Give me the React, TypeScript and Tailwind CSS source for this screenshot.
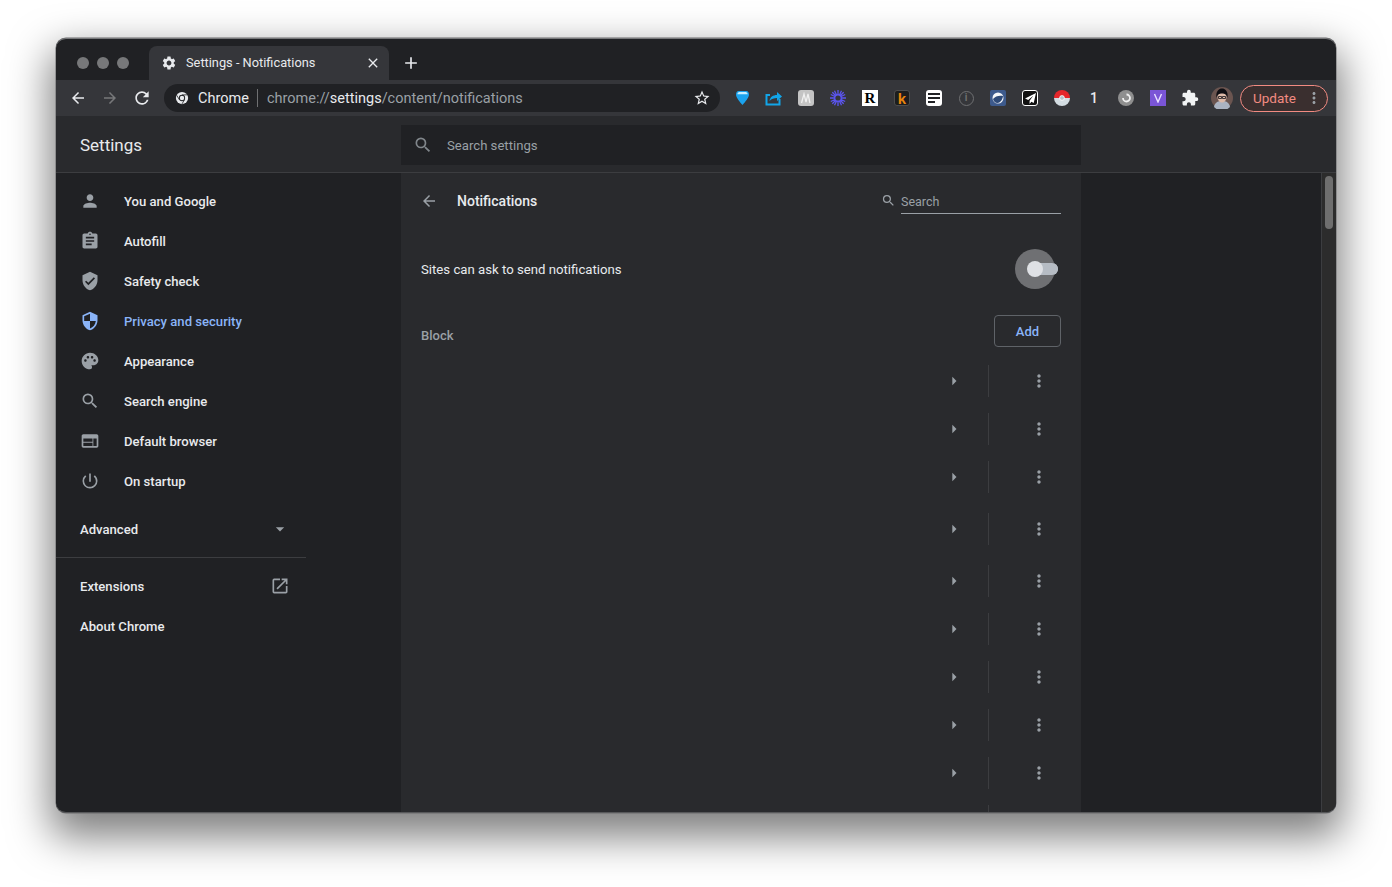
import {
  MdAdd,
  MdArrowBack,
  MdArrowDropDown,
  MdArrowForward,
  MdArrowRight,
  MdAssignment,
  MdClose,
  MdExtension,
  MdMoreVert,
  MdOpenInNew,
  MdPalette,
  MdPerson,
  MdPowerSettingsNew,
  MdRefresh,
  MdSearch,
  MdSecurity,
  MdSettings,
  MdStarBorder,
  MdVerifiedUser,
  MdWeb,
} from "react-icons/md";

const NAV_ITEMS = [
  { label: "You and Google", icon: MdPerson },
  { label: "Autofill", icon: MdAssignment },
  { label: "Safety check", icon: MdVerifiedUser },
  { label: "Privacy and security", icon: MdSecurity, active: true },
  { label: "Appearance", icon: MdPalette },
  { label: "Search engine", icon: MdSearch },
  { label: "Default browser", icon: MdWeb },
  { label: "On startup", icon: MdPowerSettingsNew },
];

// row heights of the blocked sites list, the 4th one is taller
const ROW_HEIGHTS = [
  "h-12", "h-12", "h-12", "h-14", "h-12", "h-12", "h-12", "h-12", "h-12", "h-12",
];

function ChromeLogo() {
  return (
    <svg width="14" height="14" viewBox="0 0 16 16" className="shrink-0">
      <circle cx="8" cy="8" r="7" fill="#e8eaed" />
      <circle cx="8" cy="8" r="3.6" fill="#202124" />
      <circle cx="8" cy="8" r="2.5" fill="#e8eaed" />
      <path d="M8 4.4h6.2M5 10 1.9 4.8M10.9 10 7.8 15" stroke="#202124" strokeWidth="0.9" />
    </svg>
  );
}

function ExtensionIcons() {
  return (
    <>
      <Slot>
        <svg width="13" height="16" viewBox="0 0 14 16">
          <path d="M3 .5h8C13 .5 14 2 14 4.500 14 7.500 10 12 7 15.500 4 12 0 7.500 0 4.500 0 2 1 .5 3 .5z" fill="#1ba3ee" />
          <path d="M3.500 1.500h7c1 0 2 1 2 2.500h-11c0-1.500 1-2.500 2-2.500z" fill="#c9eeff" />
        </svg>
      </Slot>
      <Slot>
        <svg width="18" height="16" viewBox="0 0 18 16" fill="none">
          <path d="M5 5H1.500v9.500h13V9" stroke="#12a5e8" strokeWidth="2" />
          <path d="M4.500 11c.5-4 3.500-6 7.500-6V2l5 4.500-5 4.500V8c-3 0-5.500.8-7.500 3z" fill="#12a5e8" />
        </svg>
      </Slot>
      <Slot>
        <div className="flex h-4 w-4 items-center justify-center rounded-[3px] bg-[#c4c4c4]">
          <svg width="12" height="12" viewBox="0 0 12 12" fill="none">
            <path d="M1.500 11 4 2l2 8 2-8 2 9" stroke="#f0f0f0" strokeWidth="1.300" />
          </svg>
        </div>
      </Slot>
      <Slot>
        <svg width="16" height="16" viewBox="0 0 16 16" stroke="#5b55f0" strokeWidth="1.300">
          <path d="M8 0v16M0 8h16M2.300 2.300l11.400 11.400M13.700 2.300 2.300 13.700M4.500 .8l7 14.400M11.500 .8l-7 14.400M.8 4.500l14.400 7M15.200 4.500l-14.400 7" />
          <circle cx="8" cy="8" r="3.300" fill="#35363a" stroke="#5b55f0" strokeWidth="1.400" />
        </svg>
      </Slot>
      <Slot>
        <div className="flex h-4 w-4 items-center justify-center bg-white font-['Liberation_Serif',serif] text-[15px] leading-none font-bold text-black">
          R
        </div>
      </Slot>
      <Slot>
        <div className="flex h-4 w-4 items-center justify-center rounded-[3px] border border-[#4d4d4d] bg-[#1d1d1d] font-['Liberation_Sans',sans-serif] text-[15px] leading-none font-bold text-[#e8850c]">
          k
        </div>
      </Slot>
      <Slot>
        <div className="flex h-4 w-4 flex-col justify-center gap-[2px] rounded-[3px] bg-white px-[2px]">
          <div className="h-[2px] w-full bg-[#202124]" />
          <div className="h-[2px] w-full bg-[#202124]" />
          <div className="h-[2px] w-[7px] bg-[#202124]" />
        </div>
      </Slot>
      <Slot>
        <div className="flex h-[15px] w-[15px] items-center justify-center rounded-full border-[1.5px] border-[#6f7072] text-[10px] leading-none font-bold text-[#6f7072]">
          i
        </div>
      </Slot>
      <Slot>
        <svg width="16" height="16" viewBox="0 0 16 16">
          <rect width="16" height="16" rx="2" fill="#3d5a8c" />
          <circle cx="8" cy="8" r="5.500" fill="#f4f6f9" />
          <path d="M3 9c2-3 7-4 10-3-.5 4-3 7-5.500 7C5 13 3.500 11 3 9z" fill="#2e4a78" />
        </svg>
      </Slot>
      <Slot>
        <div className="flex h-4 w-4 items-center justify-center rounded-[3px] border border-white bg-[#111]">
          <svg width="11" height="11" viewBox="0 0 12 12">
            <path d="M12 0 0 6l3.500 1.500L9 3 5 8.500V12l2-2.500L9.500 11z" fill="#fff" />
          </svg>
        </div>
      </Slot>
      <Slot>
        <svg width="16" height="16" viewBox="0 0 16 16">
          <path d="M0 8a8 8 0 0 1 16 0z" fill="#e5262a" />
          <path d="M0 8h16a8 8 0 0 1-16 0z" fill="#d4dde2" />
          <circle cx="8" cy="8" r="2.400" fill="#b7c3ca" stroke="#fff" strokeWidth="0.800" />
        </svg>
      </Slot>
      <Slot>
        <span className="font-['Roboto',sans-serif] text-[14px] font-medium text-[#e8eaed]">1</span>
      </Slot>
      <Slot>
        <div className="flex h-4 w-4 items-center justify-center rounded-full bg-[#8f8f8f]">
          <svg width="10" height="10" viewBox="0 0 10 10" fill="none">
            <path d="M5.500 1.500A3.500 3.500 0 1 1 2 5" stroke="#f1f1f1" strokeWidth="1.800" />
          </svg>
        </div>
      </Slot>
      <Slot>
        <div className="flex h-4 w-4 items-center justify-center bg-[#7a55d6]">
          <svg width="10" height="10" viewBox="0 0 10 10" fill="none">
            <path d="M1.500 1 5 9l3.500-8" stroke="#e8e0ff" strokeWidth="1.400" />
          </svg>
        </div>
      </Slot>
      <Slot>
        <MdExtension size={18} color="#f1f3f4" />
      </Slot>
      <Slot>
        <svg width="22" height="22" viewBox="0 0 22 22">
          <circle cx="11" cy="11" r="11" fill="#6b5550" />
          <path d="M3 20c1-5 4-6 8-6s7 1 8 6a11 11 0 0 1-16 0z" fill="#aab3c2" />
          <ellipse cx="11" cy="10" rx="4.500" ry="5.500" fill="#dcb9a8" />
          <path d="M5.500 11C4.500 4 8 1.500 11 1.500s6.500 2.500 5.500 9.500C15.500 7.500 14 6.500 11 6.500S6.500 7.500 5.500 11z" fill="#0f0e13" />
          <path d="M7.500 9.500h3v2h-3zM11.500 9.500h3v2h-3z" fill="none" stroke="#15141a" strokeWidth="0.800" />
        </svg>
      </Slot>
    </>
  );
}

function Slot({ children }: { children: React.ReactNode }) {
  return <div className="flex h-8 w-8 shrink-0 items-center justify-center">{children}</div>;
}

function NavRow({ label, icon: Icon, active }: (typeof NAV_ITEMS)[number]) {
  return (
    <div className="flex h-10 items-center pl-6">
      <Icon size={20} color={active ? "#8ab4f8" : "#9aa0a6"} />
      <span className={`mt-[2px] ml-6 text-[13.100px] font-medium ${active ? "text-[#8ab4f8]" : "text-[#e8eaed]"}`}>
        {label}
      </span>
    </div>
  );
}

export default function App() {
  return (
    <div className="h-[887px] overflow-hidden bg-white pt-[38px] pl-[56px] font-['Roboto',sans-serif]">
      <div className="flex h-[775px] w-[1280px] flex-col overflow-hidden rounded-[10px] border-t border-b border-t-[#77787a] border-b-[#57585a] bg-[#202124] shadow-[0_0_0_0.5px_#6a6b6d,0_18px_40px_6px_rgba(0,0,0,0.5)]">
        {/* Tab strip */}
        <div className="flex h-[41px] shrink-0 items-end">
          <div className="mb-[11px] ml-[21px] flex gap-2">
            <div className="h-3 w-3 rounded-full bg-[#77787a]" />
            <div className="h-3 w-3 rounded-full bg-[#77787a]" />
            <div className="h-3 w-3 rounded-full bg-[#77787a]" />
          </div>
          <div className="ml-[20px] flex h-[34px] w-[240px] items-center rounded-t-lg bg-[#35363a] pr-[8px] pl-[12px]">
            <MdSettings size={16} color="#e8eaed" />
            <span className="ml-[8px] flex-1 pl-px text-[12.800px] text-[#e8eaed]">Settings - Notifications</span>
            <MdClose size={16} color="#e8eaed" />
          </div>
          <div className="mb-[7px] ml-[12px]">
            <MdAdd size={20} color="#e8eaed" />
          </div>
        </div>

        {/* Toolbar */}
        <div className="flex h-9 shrink-0 items-center bg-[#35363a] pl-[6px]">
          <Slot>
            <MdArrowBack size={18} color="#e8eaed" />
          </Slot>
          <Slot>
            <MdArrowForward size={18} color="#77787a" />
          </Slot>
          <Slot>
            <MdRefresh size={20} color="#e8eaed" />
          </Slot>
          <div className="ml-[6px] flex h-7 w-[556px] items-center rounded-full bg-[#202124] pl-[11px]">
            <ChromeLogo />
            <span className="mt-[2px] ml-[9px] text-[14.500px] text-[#e8eaed]">Chrome</span>
            <div className="mx-[8px] h-[18px] w-px bg-[#6f7072]" />
            <span className="mt-[2px] flex-1 pl-px text-[14.500px] text-[#9aa0a6]">
              chrome://<span className="text-[#e8eaed]">settings</span>/content/notifications
            </span>
            <div className="mr-[9px]">
              <MdStarBorder size={18} color="#e8eaed" />
            </div>
          </div>
          <div className="ml-[6px] flex items-center">
            <ExtensionIcons />
          </div>
          <div className="ml-[2px] flex h-[27px] w-[88px] items-center rounded-full border border-[#f28b82] bg-[#3a2f2f] pl-3">
            <span className="flex-1 text-[13.500px] text-[#f28b82]">Update</span>
            <MdMoreVert size={18} color="#9aa0a6" className="mr-[4px]" />
          </div>
        </div>

        {/* Settings header */}
        <div className="flex h-[57px] shrink-0 items-center border-b border-[#3c3d40] bg-[#292a2d]">
          <div className="mt-[4px] w-[345px] pl-6 text-[17px] text-[#e8eaed]">Settings</div>
          <div className="mt-[2px] flex h-10 w-[680px] items-center bg-[#202124] pl-3">
            <MdSearch size={20} color="#80868b" />
            <span className="mt-[2px] ml-[14px] text-[13.150px] text-[#9aa0a6]">Search settings</span>
          </div>
        </div>

        {/* Body */}
        <div className="flex min-h-0 flex-1">
          <div className="w-[345px] shrink-0 pt-2">
            {NAV_ITEMS.map((item) => (
              <NavRow key={item.label} {...item} />
            ))}
            <div className="mt-2 flex h-10 w-[250px] items-center justify-between pr-[16px] pl-6">
              <span className="mt-[2px] text-[13.100px] font-medium text-[#e8eaed]">Advanced</span>
              <MdArrowDropDown size={20} color="#9aa0a6" />
            </div>
            <div className="mt-2 mb-2 h-px w-[250px] bg-[#3c3d40]" />
            <div className="flex h-10 w-[250px] items-center justify-between pr-[16px] pl-6">
              <span className="mt-[2px] text-[13.100px] font-medium text-[#e8eaed]">Extensions</span>
              <MdOpenInNew size={20} color="#9aa0a6" />
            </div>
            <div className="flex h-10 w-[250px] items-center pl-6">
              <span className="mt-[2px] text-[13.100px] font-medium text-[#e8eaed]">About Chrome</span>
            </div>
          </div>

          <div className="w-[680px] shrink-0 overflow-hidden bg-[#292a2d] px-5">
            <div className="flex h-14 items-center">
              <MdArrowBack size={18} color="#9aa0a6" className="ml-[-1px]" />
              <span className="ml-[19px] flex-1 text-[14px] font-medium text-[#e8eaed]">Notifications</span>
              <MdSearch size={15} color="#9aa0a6" className="mr-[5px] mb-[2px]" />
              <div className="mt-px h-[25px] w-[160px] border-b border-[#9aa0a6] text-[12.500px] leading-[26px] text-[#9aa0a6]">
                Search
              </div>
            </div>
            <div className="flex h-20 items-center justify-between">
              <span className="mt-[2px] text-[13.200px] text-[#e8eaed]">Sites can ask to send notifications</span>
              <div className="relative mr-[3px] h-3 w-[31px] rounded-full bg-[#b6bcc4]">
                <div className="absolute top-[-14px] left-[-12px] h-10 w-10 rounded-full bg-[#6f7073]" />
                <div className="absolute top-0 left-[8px] h-3 w-[23px] rounded-r-full bg-[#b6bcc4]" />
                <div className="absolute top-[-2px] left-0 h-4 w-4 rounded-full bg-[#dfe1e5]" />
              </div>
            </div>
            <div className="flex h-12 items-start justify-between">
              <span className="mt-[17px] text-[13px] font-medium text-[#9aa0a6]">Block</span>
              <div className="mt-[6px] flex h-8 w-[67px] items-center justify-center rounded border border-[#5f6368] pt-[2px] text-[13px] font-medium text-[#8ab4f8]">
                Add
              </div>
            </div>
            {ROW_HEIGHTS.map((h, i) => (
              <div key={i} className={`flex ${h} items-center justify-end pr-[12px]`}>
                <MdArrowRight size={20} color="#9aa0a6" />
                <div className="mr-10 ml-6 h-8 w-px bg-[#3c3d40]" />
                <MdMoreVert size={20} color="#9aa0a6" />
              </div>
            ))}
          </div>

          <div className="flex-1" />
          <div className="w-[15px] shrink-0 border-l border-[#3c3d40] bg-[#2c2c2c] pt-[3px] pl-[3px]">
            <div className="h-[53px] w-2 rounded-full bg-[#6e6e6e]" />
          </div>
        </div>
      </div>
    </div>
  );
}
